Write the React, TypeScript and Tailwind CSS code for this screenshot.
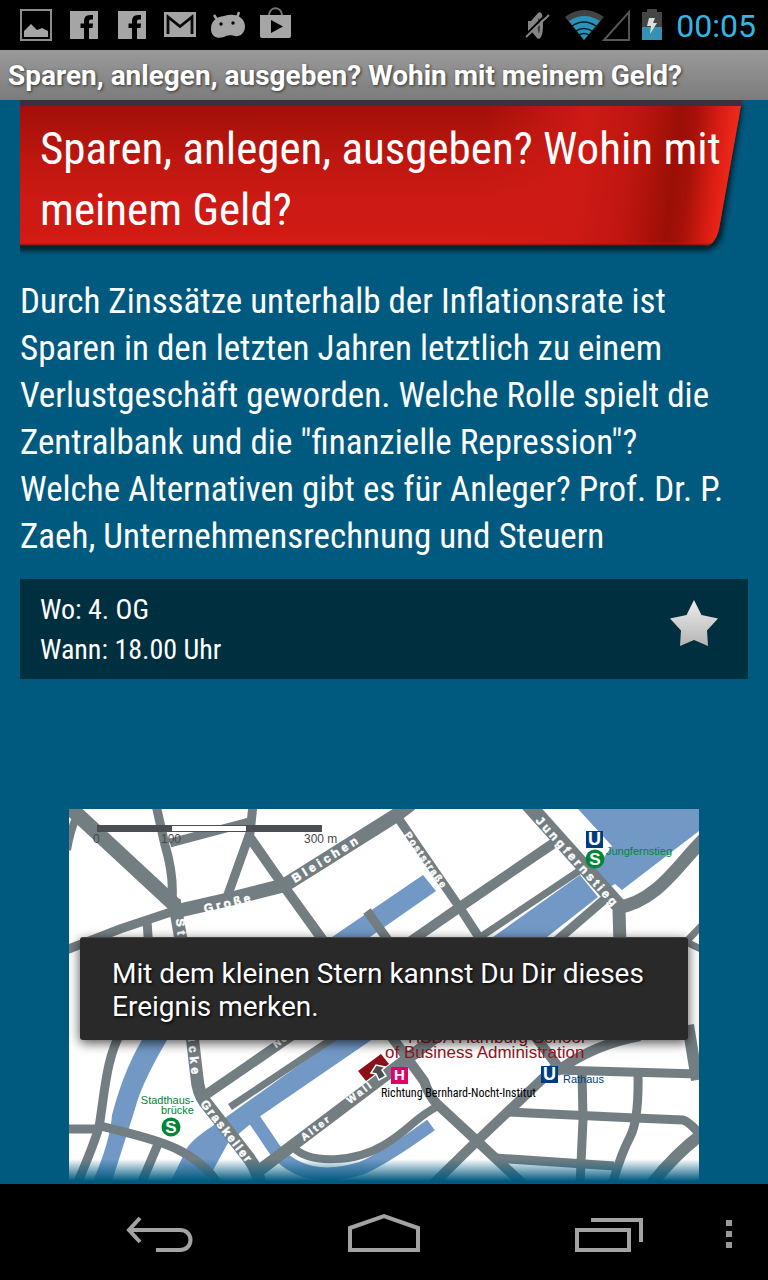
import React from 'react';

const roads: { d: string; w: number }[] = [
  { d: 'M64 802L176 906', w: 15 },
  { d: 'M76 818Q70 832 67 850', w: 8 },
  { d: 'M156 805L165 845Q174 875 172 900', w: 9 },
  { d: 'M170 843L249 822', w: 9 },
  { d: 'M253 805L250 833L226 900', w: 9 },
  { d: 'M248 835L283 885L330 950', w: 10 },
  { d: 'M173 912L230 899L285 885L395 816L412 803', w: 14 },
  { d: 'M174 911L120 929L66 950', w: 9 },
  { d: 'M147 921L149 950', w: 9 },
  { d: 'M174 900L181 940L192 1035L197 1078Q198 1092 205 1102L248 1157Q258 1170 260 1185', w: 13 },
  { d: 'M367 911L390 943', w: 9 },
  { d: 'M394 812L460 908L484 945', w: 9 },
  { d: 'M554 843L460 907L408 943', w: 10 },
  { d: 'M579 871L470 944', w: 7 },
  { d: 'M526 802L621 908', w: 15 },
  { d: 'M605 899L555 942', w: 9 },
  { d: 'M704 839C680 862 658 902 616 908', w: 13 },
  { d: 'M619 910L620 945', w: 13 },
  { d: 'M703 924L686 942L703 950', w: 7 },
  { d: 'M122 1030C106 1058 105 1091 99 1127Q93 1147 77 1184', w: 9 },
  { d: 'M66 1129L100 1129', w: 9 },
  { d: 'M101 1126C150 1139 193 1145 219 1185', w: 9 },
  { d: 'M158 1144L141 1184', w: 9 },
  { d: 'M204 1096L300 1030', w: 10 },
  { d: 'M230 1107L350 1027', w: 7 },
  { d: 'M256 1173L382 1078L440 1034', w: 12 },
  { d: 'M293 1147C310 1165 356 1162 384 1145S413 1119 438 1106', w: 8 },
  { d: 'M391 1036L424 1081Q429 1096 438 1105L477 1141L524 1185', w: 10 },
  { d: 'M433 1184L477 1141L557 1065', w: 10 },
  { d: 'M534 1035L560 1069Q596 1044 640 1036', w: 10 },
  { d: 'M556 1070L701 1074', w: 9 },
  { d: 'M688 1025L697 1080', w: 12 },
  { d: 'M582 1070L583 1120L580 1185', w: 9 },
  { d: 'M638 1073Q639 1120 630 1137T612 1185', w: 9 },
  { d: 'M508 1112L635 1118L683 1120Q690 1122 702 1137', w: 9 },
  { d: 'M495 1158L614 1166', w: 9 },
  { d: 'M702 1134Q675 1154 650 1186', w: 12 },
];

function StationS({ x, y }: { x: number; y: number }) {
  return (
    <g>
      <circle cx={x} cy={y} r="9.5" fill="#008539" />
      <text x={x} y={y + 6} textAnchor="middle" fontSize="17" fontWeight="700" fill="#fff">S</text>
    </g>
  );
}

function Sign({ x, y, letter, fill, size = 18 }: { x: number; y: number; letter: string; fill: string; size?: number }) {
  return (
    <g>
      <rect x={x} y={y} width="17" height="17" fill={fill} />
      <text x={x + 8.5} y={y + 8 + size * 0.36} textAnchor="middle" fontSize={size} fontWeight="700" fill="#fff">{letter}</text>
    </g>
  );
}

function StreetMap() {
  return (
    <svg viewBox="69 809 630 372" className="block w-full font-['Liberation_Sans',sans-serif]" role="img" aria-label="Lageplan">
      <defs>
        <linearGradient id="fade" x1="0" y1="0" x2="0" y2="1">
          <stop offset="0" stopColor="#005a7f" stopOpacity="0" />
          <stop offset="1" stopColor="#005a7f" />
        </linearGradient>
        <path id="stadthausbruecke" d="M176 919L188 1040L194 1095" />
      </defs>
      <rect x="69" y="809" width="630" height="372" fill="#fff" />
      <g fill="#7299c6">
        <path d="M578 809H699V831L622 890L615 884L608 888L594 871L612 846Z" />
        <path d="M580 875L598 897L547 937L493 937Z" />
        <path d="M332 937L423 875L436 891L370 937Z" />
        <path d="M148 1030H173Q142 1081 135 1109L112 1181H93Q110 1142 112 1115Q125 1065 148 1030Z" />
        <path d="M348 1030H386L259 1117L248 1126L228 1143L207 1181H171L187 1148Q194 1137 222 1120Z" />
      </g>
      <path d="M254 1119L275 1150C298 1178 330 1178 362 1168Q385 1158 431 1125" fill="none" stroke="#7299c6" strokeWidth="13" />
      <g fill="none" stroke="#737e83">
        {roads.map((r) => (
          <path key={r.d} d={r.d} strokeWidth={r.w} />
        ))}
      </g>

      <rect x="97" y="825" width="225" height="7" fill="#4b4f54" />
      <rect x="172" y="826" width="74" height="5" fill="#fff" />
      <g fontSize="12" fill="#45494d">
        <text x="93" y="843">0</text>
        <text x="161" y="843">100</text>
        <text x="304" y="843">300 m</text>
      </g>

      <g fill="#fff" stroke="#fff" strokeWidth="0.5" fontWeight="700" fontSize="12" className="tracking-[0.25em]">
        <text transform="translate(205 913) rotate(-14)">Große</text>
        <text transform="translate(295 883) rotate(-32)" className="tracking-[0.3em]">Bleichen</text>
        <text transform="translate(535 821) rotate(48)">Jungfernstieg</text>
        <text transform="translate(200 1104) rotate(52)" className="tracking-[0.15em]">Graskeller</text>
        <text className="tracking-[0.35em]"><textPath href="#stadthausbruecke">Stadthausbrücke</textPath></text>
      </g>
      <g fill="#fff" stroke="#fff" strokeWidth="0.4" fontWeight="700" fontSize="10" className="tracking-[0.15em]">
        <text transform="translate(404 835) rotate(55)">Poststraße</text>
        <text transform="translate(304 1141) rotate(-37)" className="tracking-[0.25em]">Alter</text>
        <text transform="translate(350 1104) rotate(-37)" className="tracking-[0.25em]">Wall</text>
        <text transform="translate(276 1048) rotate(-36)">Neuer</text>
      </g>

      <Sign x={586} y={831} letter="U" fill="#003c7d" />
      <StationS x={595} y={859} />
      <text x="606" y="855" fontSize="11" fill="#008539">Jungfernstieg</text>
      <g fontSize="11" fill="#008539" textAnchor="end">
        <text x="194" y="1104">Stadthaus-</text>
        <text x="194" y="1114">brücke</text>
      </g>
      <StationS x={171} y={1127} />

      <path d="M358 1071L381 1054L389 1064L366 1081Z" fill="#8b1018" />
      <path d="M371 1073L376 1065L385 1067L382 1070L386 1076L379 1080L376 1074Z" fill="#4b4f54" stroke="#fff" strokeWidth="1.5" />
      <g fontSize="17" fill="#94141c">
        <text x="408" y="1043">HSBA Hamburg School</text>
        <text x="385" y="1058">of Business Administration</text>
      </g>
      <Sign x={391} y={1067} letter="H" fill="#e2006b" size={15} />
      <text x="381" y="1097" fontSize="12" className="font-['Roboto_Condensed',sans-serif]" fill="#000">Richtung Bernhard-Nocht-Institut</text>
      <Sign x={541} y={1066} letter="U" fill="#003c7d" />
      <text x="563" y="1083" fontSize="11" fill="#003c7d">Rathaus</text>
      <rect x="69" y="1159" width="630" height="22" fill="url(#fade)" />
    </svg>
  );
}

function StatusBar() {
  return (
    <header className="flex h-[50px] shrink-0 items-center justify-between bg-black pr-3 pl-5">
      <svg width="274" height="50" viewBox="20 0 274 50" aria-hidden="true">
        <rect x="21" y="10" width="30" height="30" fill="none" stroke="#8c8c8c" strokeWidth="2" />
        <path d="M24 37V31L31 24L37 30L42 28L48 31V37Z" fill="#a5a5a5" />
        {[70, 118].map((x) => (
          <g key={x} transform={`translate(${x} 11)`}>
            <path d="M0 0H28V28H0Z" fill="#a5a5a5" />
            <path d="M14 28V17H10.500V12.500H14V10Q14 4 20 4H23V8.500H21Q19 8.500 19 10.500V12.500H23L22.500 17H19V28Z" fill="#000" />
          </g>
        ))}
        <rect x="164" y="12" width="32" height="25" fill="#a5a5a5" />
        <path d="M168 34V17L180 26.500L192 17V34" fill="none" stroke="#0a0a0a" strokeWidth="2.800" />
        <path d="M214 15L218 21M239 12L237 18" stroke="#a5a5a5" strokeWidth="2.500" />
        <path d="M211 29C211 21 216 17 224 16C230 14 237 14 241 18C245 21 246 27 244 31C242 36 237 37 233 35.500C230 35 228 35 226 36C221 39 211 39 211 29Z" fill="#a5a5a5" />
        <circle cx="221" cy="24" r="1.700" fill="#000" />
        <circle cx="233" cy="23" r="1.700" fill="#000" />
        <path d="M269 15C270 6 281 6 282 15" fill="none" stroke="#777" strokeWidth="2" />
        <path d="M260 15H291V36Q291 38 289 38H262Q260 38 260 36Z" fill="#a5a5a5" />
        <path d="M271 20L283 26.500L271 33Z" fill="#000" />
      </svg>
      <div className="flex items-center">
        <svg width="140" height="50" viewBox="524 0 140 50" aria-hidden="true">
          <path d="M528 21H531L538 13C542 10 543 16 543 25S541 41 537 38L532 32H528Z" fill="#858585" />
          <path d="M539 17Q536 25 539 34Q541 25 539 17Z" fill="#333" />
          <path d="M526 34.500L547 13.500" stroke="#000" strokeWidth="2" />
          <path d="M526 37L549 15" stroke="#858585" strokeWidth="2" />
          <path d="M565 17Q584 3 604 17L584 40Z" fill="#434343" />
          <path d="M569 21Q584 11 600 21L584 40Z" fill="#2b93bb" />
          <path d="M572 26Q584 18 596 26M576 31Q584 26 592 31M579 35Q584 32 589 35" fill="none" stroke="#001c28" strokeWidth="1.500" />
          <path d="M604 40L629 12V40Z" fill="none" stroke="#555" strokeWidth="2" />
          <path d="M642 12H647V9H657V12H662V28H642Z" fill="#454545" />
          <path d="M642 27H662V40H642Z" fill="#3692b5" />
          <path d="M649 18H655L653 23H657L650 34L651 26H647Z" fill="#ddd" />
        </svg>
        <time className="ml-3 pt-px font-[Roboto,sans-serif] text-[32px] leading-[50px] text-[#33b5e5]">00:05</time>
      </div>
    </header>
  );
}

function Ribbon() {
  return (
    <svg viewBox="20 100 728 160" preserveAspectRatio="none" className="absolute inset-0 h-full w-full" aria-hidden="true">
      <defs>
        <linearGradient id="red" x1="0" y1="0" x2="0" y2="1">
          <stop offset="0" stopColor="#9e0f08" />
          <stop offset="0.45" stopColor="#c11711" />
          <stop offset="0.7" stopColor="#cd1a14" />
          <stop offset="0.93" stopColor="#d01a14" />
          <stop offset="1" stopColor="#df1b12" />
        </linearGradient>
        <linearGradient id="fold" gradientUnits="userSpaceOnUse" x1="480" y1="160" x2="730" y2="190">
          <stop offset="0" stopColor="#d01b15" stopOpacity="0" />
          <stop offset="0.4" stopColor="#ce1a14" />
          <stop offset="0.6" stopColor="#be160f" />
          <stop offset="0.77" stopColor="#9b0f06" />
          <stop offset="0.83" stopColor="#a51108" />
          <stop offset="0.94" stopColor="#df1f15" />
          <stop offset="1" stopColor="#ee2a1b" />
        </linearGradient>
        <filter id="soft" x="-5%" y="-10%" width="110%" height="125%">
          <feGaussianBlur stdDeviation="2.500" />
        </filter>
        <linearGradient id="base" x1="0" y1="0" x2="0" y2="1">
          <stop offset="0.97" stopColor="#ef2518" stopOpacity="0" />
          <stop offset="1" stopColor="#350f14" />
        </linearGradient>
      </defs>
      <path d="M10 104H743L723 232Q719 251 704 251H10Z" fill="#05202d" filter="url(#soft)" />
      <path d="M20 100H742L719 229Q715 246 704 246H20Z" fill="url(#red)" />
      <path d="M460 100H742L719 229Q715 246 704 246H460Z" fill="url(#fold)" />
      <path d="M20 100H742L719 229Q715 246 704 246H20Z" fill="url(#base)" />
      <path d="M20 100H742L741 106H20Z" fill="#3b303e" />
    </svg>
  );
}

export default function App() {
  return (
    <div className="relative flex min-h-screen flex-col bg-[#005a7f] font-[Roboto,sans-serif] text-white">
      <StatusBar />
      <div className="flex h-[50px] shrink-0 items-center bg-linear-to-b from-[#9a9a9a] to-[#7c7c7c] px-2 pt-0.5">
        <p className="text-[28px] leading-8 font-bold whitespace-nowrap [text-shadow:1px_1px_3px_#333]">
          Sparen, anlegen, ausgeben? Wohin mit meinem Geld?
        </p>
      </div>

      <main className="flex-1 px-5 font-['Roboto_Condensed',Roboto,sans-serif]">
        <div className="relative h-40 px-5 pt-[18px]">
          <Ribbon />
          <h1 className="relative text-[45px] leading-[61px] whitespace-nowrap">
            Sparen, anlegen, ausgeben? Wohin mit
            <br />
            meinem Geld?
          </h1>
        </div>
        <p className="pt-[18px] text-[35px] leading-[47px] whitespace-nowrap">
          Durch Zinssätze unterhalb der Inflationsrate ist
          <br />
          Sparen in den letzten Jahren letztlich zu einem
          <br />
          Verlustgeschäft geworden. Welche Rolle spielt die
          <br />
          Zentralbank und die "finanzielle Repression"?
          <br />
          Welche Alternativen gibt es für Anleger? Prof. Dr. P.
          <br />
          Zaeh, Unternehmensrechnung und Steuern
        </p>
        <section className="mt-[19px] flex h-[100px] items-center justify-between bg-[#00303f] pr-[30px] pl-5">
          <p className="pt-0.5 text-[28px] leading-10">
            Wo: 4. OG
            <br />
            Wann: 18.00 Uhr
          </p>
          <button type="button" aria-label="Ereignis merken" className="mb-3">
            <svg width="48" height="46" viewBox="0 0 48 46">
              <defs>
                <linearGradient id="silver" x1="0" y1="0" x2="0" y2="1">
                  <stop offset="0" stopColor="#eee" />
                  <stop offset="1" stopColor="#b4b4b4" />
                </linearGradient>
              </defs>
              <path d="M24 0L31.500 15L48 18.500L37 30.500L38 46L24 40L10 46L11 30.500L0 18.500L16.500 15Z" fill="url(#silver)" />
            </svg>
          </button>
        </section>
        <div className="mx-[49px] mt-[130px]">
          <StreetMap />
        </div>
      </main>

      <div role="status" className="absolute inset-x-20 bottom-60 rounded-[3px] border-t border-[#444] bg-[#292929] px-8 pt-[19px] pb-[17px] text-[28px] leading-[33px] [box-shadow:0_3px_12px_#000000b0] [text-shadow:1px_1px_3px_#000]">
        Mit dem kleinen Stern kannst Du Dir dieses Ereignis merken.
      </div>

      <nav className="flex h-24 shrink-0 items-center bg-black pt-1">
        <div className="flex flex-1 justify-between pr-20 pl-[123px]">
          <button type="button" aria-label="Zurück">
            <svg width="72" height="48" viewBox="124 1210 72 48" fill="none" stroke="#a3a3a3" strokeWidth="4">
              <path d="M129 1230H181C195 1230 195 1250 181 1250H157" />
              <path d="M141 1218L130 1230L141 1242" />
            </svg>
          </button>
          <button type="button" aria-label="Startseite">
            <svg width="72" height="48" viewBox="348 1210 72 48" fill="none" stroke="#a3a3a3" strokeWidth="4">
              <path d="M350 1228L384 1216L418 1228V1250H350Z" />
            </svg>
          </button>
          <button type="button" aria-label="Letzte Apps">
            <svg width="72" height="48" viewBox="574 1210 72 48" fill="none" stroke="#a3a3a3" strokeWidth="4">
              <path d="M578 1230H630V1250H578ZM592 1220H642V1242" />
            </svg>
          </button>
        </div>
        <button type="button" aria-label="Menü" className="mr-[35px]">
          <svg width="8" height="30" viewBox="0 0 8 30" fill="#999">
            <path d="M1 1H7V7H1ZM1 12H7V18H1ZM1 23H7V29H1Z" />
          </svg>
        </button>
      </nav>
    </div>
  );
}
